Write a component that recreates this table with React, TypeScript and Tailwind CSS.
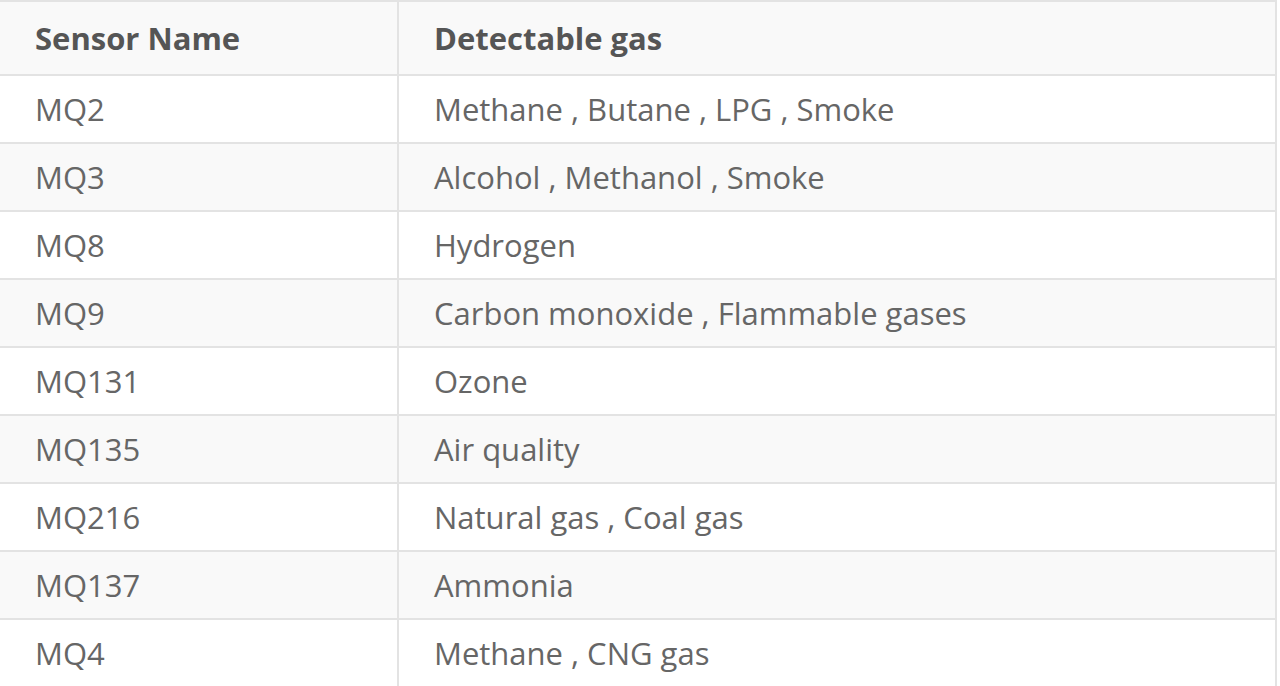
import React from "react";

const rows: [string, string][] = [
  ["MQ2", "Methane , Butane , LPG , Smoke"],
  ["MQ3", "Alcohol , Methanol , Smoke"],
  ["MQ8", "Hydrogen"],
  ["MQ9", "Carbon monoxide , Flammable gases"],
  ["MQ131", "Ozone"],
  ["MQ135", "Air quality"],
  ["MQ216", "Natural gas , Coal gas"],
  ["MQ137", "Ammonia"],
  ["MQ4", "Methane , CNG gas"],
];

export default function App() {
  return (
    <div className="w-[1280px] h-[686px] overflow-hidden bg-white" style={{ fontFamily: '"Open Sans", sans-serif' }}>
      <div className="w-[1277px] border-t-2 border-r-2 border-[#e3e3e3]">
        <div className="flex h-[74px] bg-[#f9f9f9] border-b-2 border-[#e3e3e3] text-[31px] font-bold text-[#555]">
          <div className="w-[399px] shrink-0 border-r-2 border-[#e3e3e3] pl-[35px] flex items-center">Sensor Name</div>
          <div className="flex-1 pl-[35px] flex items-center">Detectable gas</div>
        </div>
        {rows.map(([a, b], i) => (
          <div
            key={a}
            className={`flex h-[68px] border-b-2 border-[#e3e3e3] text-[31px] text-[#666] ${i % 2 === 1 ? "bg-[#f9f9f9]" : "bg-white"}`}
          >
            <div className="w-[399px] shrink-0 border-r-2 border-[#e3e3e3] pl-[35px] flex items-center">{a}</div>
            <div className="flex-1 pl-[35px] flex items-center">{b}</div>
          </div>
        ))}
      </div>
    </div>
  );
}
